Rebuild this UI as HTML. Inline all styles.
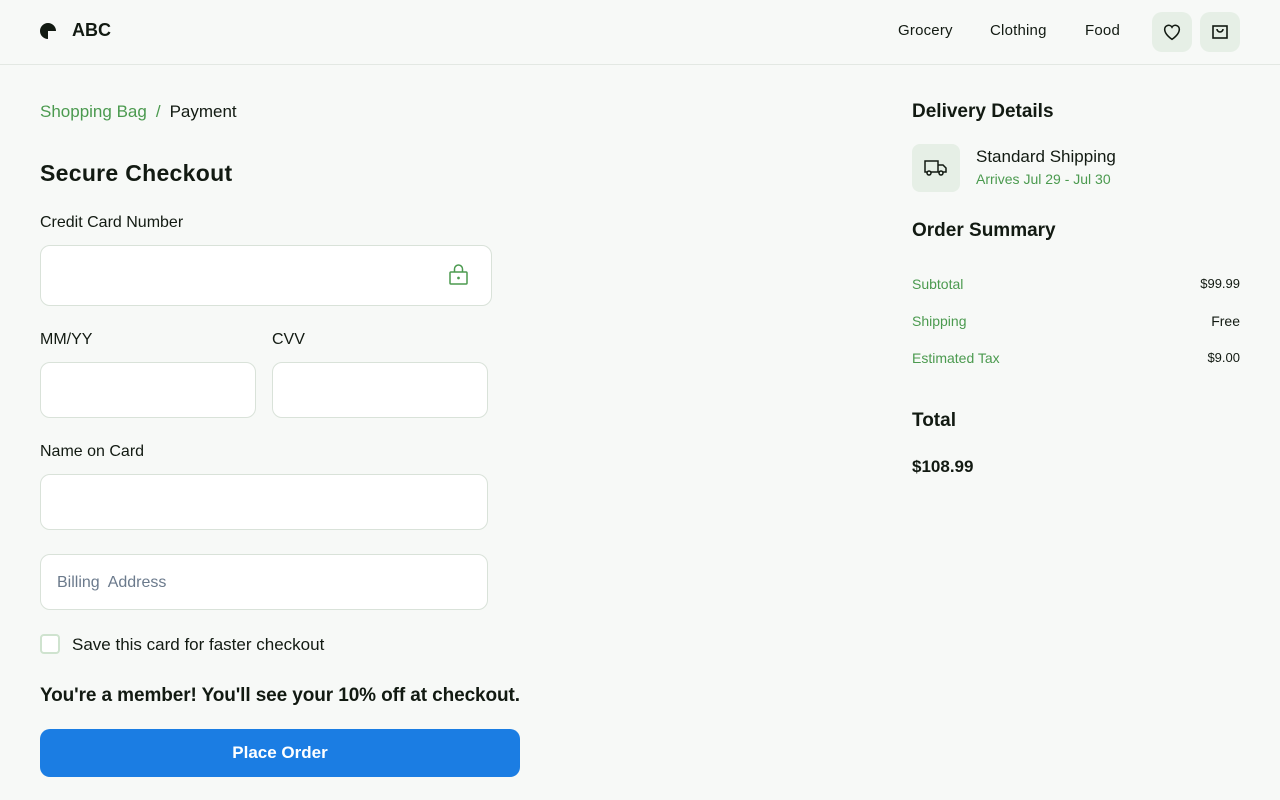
<!DOCTYPE html>
<html><head><style>
*{box-sizing:border-box;margin:0;padding:0}
body{width:1280px;height:800px;background:#f7f9f7;font-family:"Liberation Sans",sans-serif;color:#121a12;position:relative;overflow:hidden}
.a{position:absolute}
header{position:absolute;left:0;top:0;width:1280px;height:65px;border-bottom:1px solid #e3e8e3}
.nav{font-size:15px;top:22px;letter-spacing:.2px}
.ib{width:40px;height:40px;border-radius:10px;background:#e6efe6;top:12px;display:flex;align-items:center;justify-content:center}
.g{color:#4b9a4f}
.in{position:absolute;background:#fff;border:1px solid #d9e2d9;border-radius:10px}
.lbl{font-size:16px}
.row{font-size:14px;left:912px;width:328px;display:flex;justify-content:space-between}
.row span:last-child{color:#121a12;font-size:13px}
</style></head><body>
<header>
<svg class="a" style="left:40px;top:23px" width="17" height="16" viewBox="0 0 17 16"><path d="M8 0A8 8 0 1 0 8 16L8 8L16 8A8 8 0 0 0 8 0Z" fill="#121a12"/></svg>
<div class="a" style="left:72px;top:20px;font-size:18px;font-weight:bold">ABC</div>
<div class="a nav" style="left:898px">Grocery</div>
<div class="a nav" style="left:990px">Clothing</div>
<div class="a nav" style="left:1085px">Food</div>
<div class="a ib" style="left:1152px"><svg width="22" height="22" viewBox="0 0 24 24" fill="none" stroke="#121a12" stroke-width="1.7"><path d="M12 20s-8-5-8-11a4.3 4.3 0 0 1 8-2.2A4.3 4.3 0 0 1 20 9c0 6-8 11-8 11z"/></svg></div>
<div class="a ib" style="left:1200px"><svg width="18" height="18" viewBox="0 0 18 18" fill="none" stroke="#121a12" stroke-width="1.6"><rect x="2" y="3" width="14" height="12"/><path d="M6 6a3 3 0 0 0 6 0"/></svg></div>
</header>
<div class="a" style="left:40px;top:102px;font-size:17px"><span class="g">Shopping Bag</span><span class="g" style="margin:0 9px">/</span>Payment</div>
<div class="a" style="left:40px;top:160px;font-size:23px;font-weight:bold;letter-spacing:.3px">Secure Checkout</div>
<div class="a lbl" style="left:40px;top:214px">Credit Card Number</div>
<div class="in" style="left:40px;top:245px;width:452px;height:61px"></div>
<svg class="a" style="left:449px;top:264px" width="20" height="22" viewBox="0 0 20 22" fill="none" stroke="#4b9a4f" stroke-width="1.5"><rect x="1" y="8" width="17" height="12" rx="1"/><path d="M5.5 8V5a4 4 0 0 1 8 0v3"/><circle cx="9.5" cy="14" r=".6" fill="#4b9a4f"/></svg>
<div class="a lbl" style="left:40px;top:331px">MM/YY</div>
<div class="a lbl" style="left:272px;top:331px">CVV</div>
<div class="in" style="left:40px;top:362px;width:216px;height:56px"></div>
<div class="in" style="left:272px;top:362px;width:216px;height:56px"></div>
<div class="a lbl" style="left:40px;top:443px">Name on Card</div>
<div class="in" style="left:40px;top:474px;width:448px;height:56px"></div>
<div class="in" style="left:40px;top:554px;width:448px;height:56px"></div>
<div class="a" style="left:57px;top:574px;font-size:16px;color:#6b7a8c">Billing&nbsp; Address</div>
<div class="a" style="left:40px;top:634px;width:20px;height:20px;border:2px solid #cfe3cf;border-radius:4px;background:#fff"></div>
<div class="a" style="left:72px;top:635px;font-size:17px">Save this card for faster checkout</div>
<div class="a" style="left:40px;top:685px;font-size:19px;font-weight:bold;letter-spacing:-.1px">You're a member! You'll see your 10% off at checkout.</div>
<div class="a" style="left:40px;top:729px;width:480px;height:48px;border-radius:10px;background:#1b7de3;color:#fff;font-size:17px;font-weight:bold;display:flex;align-items:center;justify-content:center">Place Order</div>

<div class="a" style="left:912px;top:101px;font-size:19px;font-weight:bold">Delivery Details</div>
<div class="a" style="left:912px;top:144px;width:48px;height:48px;border-radius:8px;background:#e6efe6;display:flex;align-items:center;justify-content:center"><svg width="24" height="18" viewBox="0 0 24 18" fill="none" stroke="#121a12" stroke-width="1.5"><path d="M1 2h13v11H1zM14 6h5l3 3v4h-8"/><circle cx="5" cy="14" r="2" fill="#e6efe6"/><circle cx="17" cy="14" r="2" fill="#e6efe6"/></svg></div>
<div class="a" style="left:976px;top:147px;font-size:17px">Standard Shipping</div>
<div class="a g" style="left:976px;top:171px;font-size:14px">Arrives Jul 29 - Jul 30</div>
<div class="a" style="left:912px;top:220px;font-size:19px;font-weight:bold">Order Summary</div>
<div class="a row g" style="top:276px"><span>Subtotal</span><span>$99.99</span></div>
<div class="a row g" style="top:313px"><span>Shipping</span><span style="font-size:14px!important">Free</span></div>
<div class="a row g" style="top:350px"><span>Estimated Tax</span><span>$9.00</span></div>
<div class="a" style="left:912px;top:410px;font-size:19px;font-weight:bold">Total</div>
<div class="a" style="left:912px;top:457px;font-size:17px;font-weight:bold">$108.99</div>
</body></html>
